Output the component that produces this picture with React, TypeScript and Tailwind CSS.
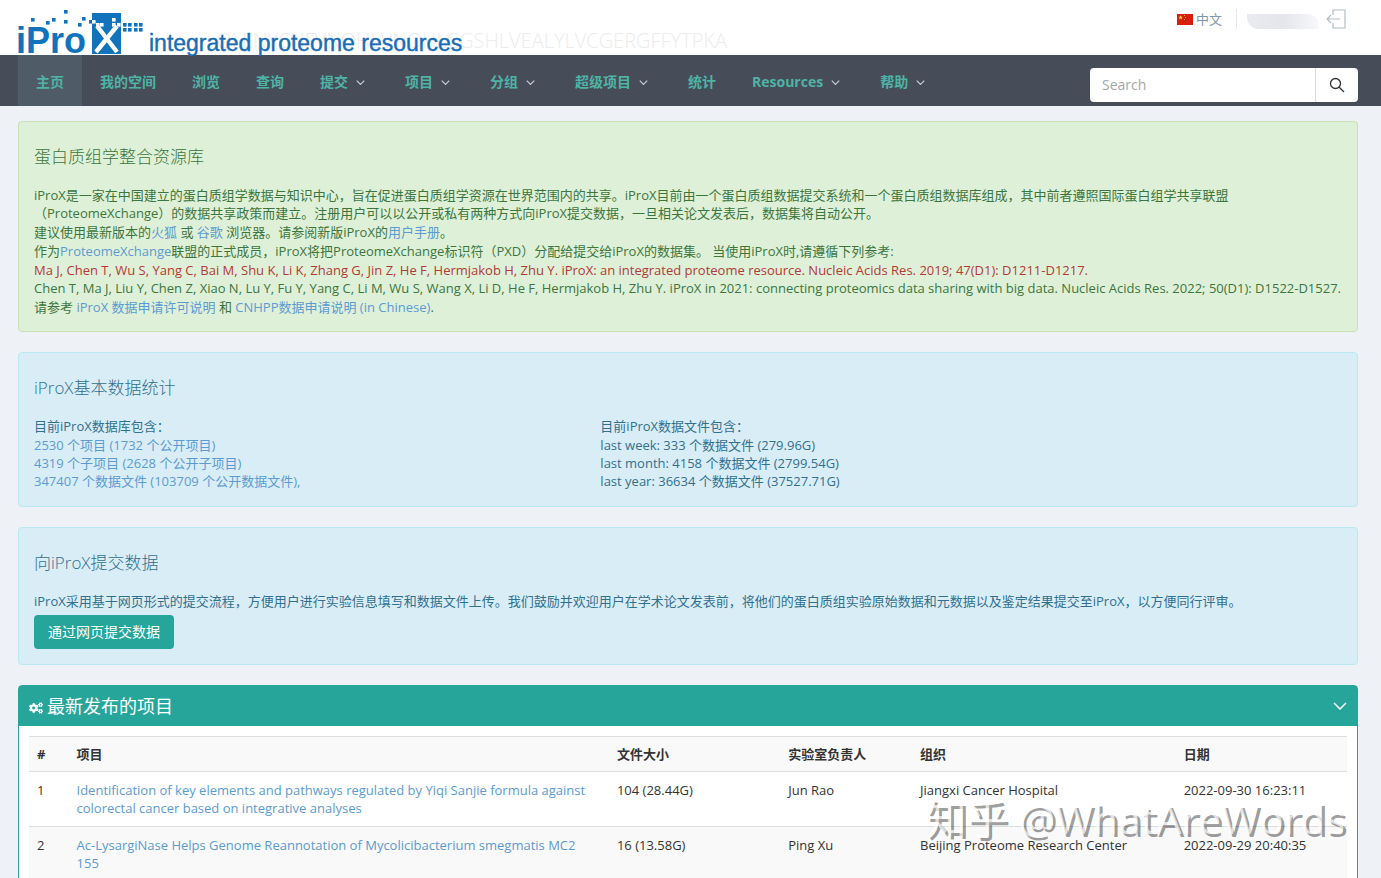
import { FaCogs } from "react-icons/fa";

const sans = "font-['Open_Sans','Noto_Sans_CJK_SC',sans-serif]";

const nav = [
  { label: "主页", active: true },
  { label: "我的空间" },
  { label: "浏览" },
  { label: "查询" },
  { label: "提交", menu: true },
  { label: "项目", menu: true },
  { label: "分组", menu: true },
  { label: "超级项目", menu: true },
  { label: "统计" },
  { label: "Resources", menu: true },
  { label: "帮助", menu: true },
];

const rows = [
  {
    title:
      "Identification of key elements and pathways regulated by Yiqi Sanjie formula against colorectal cancer based on integrative analyses",
    size: "104 (28.44G)",
    lead: "Jun Rao",
    org: "Jiangxi Cancer Hospital",
    date: "2022-09-30 16:23:11",
  },
  {
    title:
      "Ac-LysargiNase Helps Genome Reannotation of Mycolicibacterium smegmatis MC2 155",
    size: "16 (13.58G)",
    lead: "Ping Xu",
    org: "Beijing Proteome Research Center",
    date: "2022-09-29 20:40:35",
  },
];

const dots = [
  [31, 18], [46, 21], [52, 18], [64, 10], [64, 20], [78, 23], [82, 17], [89, 20],
  [123, 23], [128, 23], [134, 23], [139, 23], [123, 28], [128, 28], [134, 28], [139, 28],
];
const holes = [[92, 20], [96, 23], [100, 23], [112, 18], [112, 23], [117, 23]];

function Link({ children }: { children: React.ReactNode }) {
  return (
    <a href="#" className="text-[#5b9bd1]">
      {children}
    </a>
  );
}

function Chevron({ className }: { className: string }) {
  return (
    <svg viewBox="0 0 14 8" className={className} fill="none" stroke="currentColor" aria-hidden="true">
      <path d="M1 1l6 6 6-6" />
    </svg>
  );
}

function Logo() {
  return (
    <svg className="h-[55px] w-[740px] overflow-visible font-['Liberation_Sans',sans-serif]" viewBox="0 0 740 55" role="img" aria-label="iProX">
      <text x="727" y="48" textAnchor="end" fontSize="20" fontWeight="300" fill="#ececec" className="font-['Open_Sans',sans-serif]">
        QLENYCNFVNQHLVNQHLCGSHLVEALYLVCGERGFFYTPKA
      </text>
      <g fill="#1273bd">
        <text x="16" y="53" fontSize="36" fontWeight="700">iPro</text>
        <rect x="92" y="13" width="29" height="41" />
        {dots.map(([x, y]) => (
          <rect key={`${x}-${y}`} x={x} y={y} width="3.6" height="3.6" />
        ))}
      </g>
      <g fill="#fff">
        {holes.map(([x, y]) => (
          <rect key={`${x}-${y}`} x={x} y={y} width="3.6" height="3.6" />
        ))}
      </g>
      <path d="M97 26L117 52M117 26L96 52" stroke="#fff" strokeWidth="4.4" />
      <text x="149" y="51" fontSize="23" fill="#1a6db3" stroke="#1a6db3" strokeWidth="0.4">
        integrated proteome resources
      </text>
    </svg>
  );
}

export default function App() {
  return (
    <div className={`relative h-screen overflow-hidden bg-[#eef1f5] text-[13px] leading-[18px] text-[#333] ${sans}`}>
      <header className="flex h-[55px] items-start justify-between bg-white pr-[35px]">
        <Logo />
        <div className="flex h-[38px] items-center text-[#7f96ac]">
          <a href="#" className="flex items-center gap-[3px]">
            <svg viewBox="0 0 16 11" className="h-[11px] w-4" aria-hidden="true">
              <rect width="16" height="11" fill="#d81e0c" />
              <path d="M3.5 1.2l.7 1.5 1.6.1-1.2 1 .4 1.6-1.5-.9-1.4.9.4-1.6-1.2-1 1.6-.1z" fill="#ffd54a" />
              <path d="M7 1h1v1H7zM8 3h1v1H8zM7 5h1v1H7z" fill="#f9a13a" />
            </svg>
            中文
          </a>
          <span className="ml-[14px] h-5 w-px bg-[#e3e8ec]" />
          <span className="ml-[10px] mt-1 h-[15px] w-[72px] rounded-bl-xl rounded-tr-xl bg-linear-to-r from-[#e9ebf0] via-[#e4e6ec] to-[#f7f8fa]" />
          <button type="button" aria-label="Log out" className="ml-[7px]">
            <svg viewBox="0 0 20 20" className="size-5" fill="none" stroke="#b4bfc4" strokeWidth="1.2">
              <path d="M7 6V1h12v18H7v-5M14 10H1M5 6l-4 4 4 4" />
            </svg>
          </button>
        </div>
      </header>

      <nav className="flex h-[51px] items-start justify-between bg-[#464d59] pl-[18px] pr-[23px]">
        <ul className="flex text-sm font-bold text-[#4fb3a5]">
          {nav.map((item) => (
            <li key={item.label}>
              <a
                href="#"
                className={`flex h-[51px] items-center gap-2 pb-px pl-[18px] pt-1 ${item.active ? "bg-[#4f5b67]" : ""} ${item.menu ? "pr-[22px]" : "pr-[18px]"}`}
              >
                {item.label}
                {item.menu && <Chevron className="h-[5px] w-[9px] stroke-2 text-[#c3cbd3]" />}
              </a>
            </li>
          ))}
        </ul>
        <form className="mt-[13px] flex h-[34px] w-[268px] overflow-hidden rounded bg-white" onSubmit={(e) => e.preventDefault()}>
          <input
            aria-label="Search"
            placeholder="Search"
            className="min-w-0 flex-1 px-3 text-sm outline-none placeholder:text-[#a6a6a6]"
          />
          <button type="submit" aria-label="Search" className="flex w-[43px] items-center justify-center border-l border-[#ddd]">
            <svg viewBox="0 0 16 16" className="size-4" fill="none" stroke="#333" strokeWidth="1.3">
              <circle cx="6.5" cy="6.5" r="5" />
              <path d="M10 10l5 5" />
            </svg>
          </button>
        </form>
      </nav>

      <main className="flex flex-col gap-5 pl-[18px] pr-[23px] pt-[15px]">
        <section className="rounded border border-[#c9e2b3] bg-[#dff0d8] px-[15px] pb-[15px] pt-[25px] text-[#3c763d]">
          <h4 className="mb-[19px] text-[17px] font-light leading-[20px]">蛋白质组学整合资源库</h4>
          <div className="flex flex-col gap-px">
            <p>
              iProX是一家在中国建立的蛋白质组学数据与知识中心，旨在促进蛋白质组学资源在世界范围内的共享。iProX目前由一个蛋白质组数据提交系统和一个蛋白质组数据库组成，其中前者遵照国际蛋白组学共享联盟
              <br />
              （ProteomeXchange）的数据共享政策而建立。注册用户可以以公开或私有两种方式向iProX提交数据，一旦相关论文发表后，数据集将自动公开。
            </p>
            <p>
              建议使用最新版本的<Link>火狐</Link> 或 <Link>谷歌</Link> 浏览器。请参阅新版iProX的<Link>用户手册</Link>。
            </p>
            <p>
              作为<Link>ProteomeXchange</Link>联盟的正式成员，iProX将把ProteomeXchange标识符（PXD）分配给提交给iProX的数据集。 当使用iProX时,请遵循下列参考:
            </p>
            <div>
              <p className="text-[#b23a34]">
                Ma J, Chen T, Wu S, Yang C, Bai M, Shu K, Li K, Zhang G, Jin Z, He F, Hermjakob H, Zhu Y. iProX: an integrated proteome resource. Nucleic Acids Res. 2019; 47(D1): D1211-D1217.
              </p>
              <p>
                Chen T, Ma J, Liu Y, Chen Z, Xiao N, Lu Y, Fu Y, Yang C, Li M, Wu S, Wang X, Li D, He F, Hermjakob H, Zhu Y. iProX in 2021: connecting proteomics data sharing with big data. Nucleic Acids Res. 2022; 50(D1): D1522-D1527.
              </p>
            </div>
            <p>
              请参考 <Link>iProX 数据申请许可说明</Link> 和 <Link>CNHPP数据申请说明 (in Chinese)</Link>.
            </p>
          </div>
        </section>

        <section className="rounded border border-[#bce8f1] bg-[#d9edf7] px-[15px] pb-4 pt-[25px] text-[#31708f]">
          <h4 className="mb-[19px] text-[17px] font-light leading-[20px]">iProX基本数据统计</h4>
          <div className="flex">
            <div className="flex w-[43.3%] flex-col">
              <p className="mb-px">目前iProX数据库包含：</p>
              <Link>2530 个项目 (1732 个公开项目)</Link>
              <Link>4319 个子项目 (2628 个公开子项目)</Link>
              <Link>347407 个数据文件 (103709 个公开数据文件),</Link>
            </div>
            <div>
              <p className="mb-px">目前iProX数据文件包含：</p>
              <p>last week: 333 个数据文件 (279.96G)</p>
              <p>last month: 4158 个数据文件 (2799.54G)</p>
              <p>last year: 36634 个数据文件 (37527.71G)</p>
            </div>
          </div>
        </section>

        <section className="rounded border border-[#bce8f1] bg-[#d9edf7] px-[15px] pb-[15px] pt-[25px] text-[#31708f]">
          <h4 className="mb-[19px] text-[17px] font-light leading-[20px]">向iProX提交数据</h4>
          <p className="mb-[5px]">
            iProX采用基于网页形式的提交流程，方便用户进行实验信息填写和数据文件上传。我们鼓励并欢迎用户在学术论文发表前，将他们的蛋白质组实验原始数据和元数据以及鉴定结果提交至iProX，以方便同行评审。
          </p>
          <button type="button" className="h-[34px] rounded bg-[#26a69a] px-[14px] text-sm text-white">
            通过网页提交数据
          </button>
        </section>

        <section className="rounded-t border border-[#26a69a] bg-white">
          <header className="flex h-10 items-center justify-between bg-[#26a69a] px-[10px] text-white">
            <h3 className="flex items-center gap-1 text-lg">
              <FaCogs className="mt-1 size-[14px]" />
              最新发布的项目
            </h3>
            <button type="button" aria-label="Collapse">
              <Chevron className="h-2 w-[14px] stroke-[1.5]" />
            </button>
          </header>
          <div className="p-[10px]">
            <table className="w-full table-fixed text-left">
              <thead>
                <tr className="border-y border-[#ddd] bg-[#f9f9f9]">
                  <th className="w-[3%] p-2">#</th>
                  <th className="w-[41%] p-2">项目</th>
                  <th className="w-[13%] p-2">文件大小</th>
                  <th className="w-[10%] p-2">实验室负责人</th>
                  <th className="w-[20%] p-2">组织</th>
                  <th className="w-[13%] p-2">日期</th>
                </tr>
              </thead>
              <tbody>
                {rows.map((row, i) => (
                  <tr key={row.title} className="border-b border-[#ddd] align-top even:bg-[#f9f9f9]">
                    <td className="px-2 py-[9px]">{i + 1}</td>
                    <td className="px-2 py-[9px]"><Link>{row.title}</Link></td>
                    <td className="px-2 py-[9px]">{row.size}</td>
                    <td className="px-2 py-[9px]">{row.lead}</td>
                    <td className="px-2 py-[9px]">{row.org}</td>
                    <td className="px-2 py-[9px]">{row.date}</td>
                  </tr>
                ))}
              </tbody>
            </table>
          </div>
        </section>
      </main>

      <div className="pointer-events-none absolute bottom-[35px] right-9 text-[41px] leading-[50px] text-white/70 [text-shadow:3px_3px_0_#0006]">
        知乎 @WhatAreWords
      </div>
    </div>
  );
}
